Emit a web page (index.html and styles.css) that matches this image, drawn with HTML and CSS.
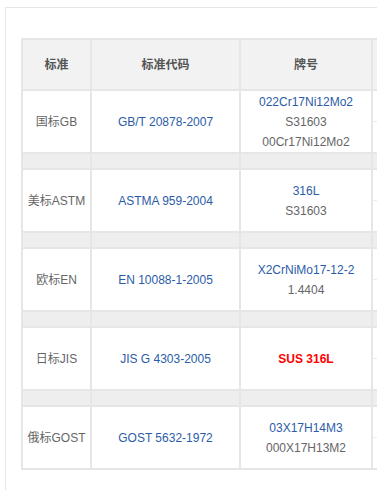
FILE: index.html
```html
<!DOCTYPE html>
<html lang="zh">
<head>
<meta charset="utf-8">
<link rel="stylesheet" href="styles.css">
</head>
<body>
<div class="panel">
  <table class="grades">
    <colgroup>
      <col class="c1"><col class="c2"><col class="c3"><col class="c4">
    </colgroup>
    <tr class="head">
      <td>标准</td><td>标准代码</td><td>牌号</td><td class="more"></td>
    </tr>
    <tr class="data">
      <td class="std">国标GB</td>
      <td class="code">GB/T 20878-2007</td>
      <td class="grade"><span class="link">022Cr17Ni12Mo2</span><br>S31603<br>00Cr17Ni12Mo2</td>
      <td class="more"><div class="sub"></div><div class="sub"></div></td>
    </tr>
    <tr class="sep"><td></td><td></td><td></td><td></td></tr>
    <tr class="data">
      <td class="std">美标ASTM</td>
      <td class="code">ASTMA 959-2004</td>
      <td class="grade"><span class="link">316L</span><br>S31603</td>
      <td class="more"><div class="sub"></div><div class="sub"></div></td>
    </tr>
    <tr class="sep"><td></td><td></td><td></td><td></td></tr>
    <tr class="data">
      <td class="std">欧标EN</td>
      <td class="code">EN 10088-1-2005</td>
      <td class="grade"><span class="link">X2CrNiMo17-12-2</span><br>1.4404</td>
      <td class="more"><div class="sub"></div><div class="sub"></div></td>
    </tr>
    <tr class="sep"><td></td><td></td><td></td><td></td></tr>
    <tr class="data">
      <td class="std">日标JIS</td>
      <td class="code">JIS G 4303-2005</td>
      <td class="grade"><span class="hot">SUS 316L</span></td>
      <td class="more"><div class="sub"></div><div class="sub"></div></td>
    </tr>
    <tr class="sep"><td></td><td></td><td></td><td></td></tr>
    <tr class="data">
      <td class="std">俄标GOST</td>
      <td class="code">GOST 5632-1972</td>
      <td class="grade"><span class="link">03X17H14M3</span><br>000X17H13M2</td>
      <td class="more"><div class="sub"></div><div class="sub"></div></td>
    </tr>
  </table>
</div>
</body>
</html>
```
FILE: styles.css
```css
html, body {
  margin: 0;
  padding: 0;
  overflow: hidden;
  background: #fff;
}
body {
  font-family: "Liberation Sans", Arial, "Noto Sans CJK SC", sans-serif;
  font-size: 12px;
  color: #666;
}
.panel {
  margin: 7px 0 0 5px;
  width: 460px;
  height: 520px;
  border: 1px solid #e6e6e6;
  padding: 30px 0 0 15px;
  box-sizing: border-box;
}
.grades {
  border-collapse: separate;
  border-spacing: 0;
  table-layout: fixed;
  width: 380px;
  border-top: 2px solid #e6e6e6;
  border-left: 2px solid #e6e6e6;
}
.c1 { width: 69px; }
.c2 { width: 149px; }
.c3 { width: 132px; }
.c4 { width: 30px; }
.grades td {
  border-right: 2px solid #e6e6e6;
  border-bottom: 2px solid #e6e6e6;
  padding: 0;
  text-align: center;
  vertical-align: middle;
  line-height: 20px;
}
.head td {
  height: 49px;
  background: #f2f2f2;
  color: #555;
  font-weight: bold;
}
.data td {
  height: 61px;
}
.sep td {
  height: 14px;
  background: #eeeeee;
}
.std { color: #666; }
.code { color: #2b5ca8; }
.grade { color: #666; }
.link { color: #2b5ca8; }
.hot { color: #ff0000; font-weight: bold; }
.data td.more { vertical-align: top; }
.sub { height: 30px; }
.sub:first-child { border-bottom: 1px solid #ececec; }
```
